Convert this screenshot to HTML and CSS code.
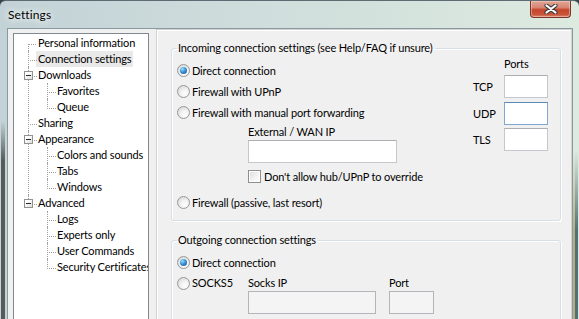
FILE: index.html
```html
<!DOCTYPE html>
<html lang="en">
<head>
    <meta charset="UTF-8">
    <title>Settings</title>
    <link rel="stylesheet" href="styles.css">
</head>
<body>
<div class="window">
    <div class="titlebar">
        <span class="title">Settings</span>
        <button class="close-btn" title="Close">
            <svg width="14" height="10" viewBox="0 0 14 10">
                <path d="M2.5 1.5 L11.5 8.5 M11.5 1.5 L2.5 8.5" stroke="#3c3c3c" stroke-width="4.2" stroke-linecap="round"/>
                <path d="M2.5 1.5 L11.5 8.5 M11.5 1.5 L2.5 8.5" stroke="#ffffff" stroke-width="2.2" stroke-linecap="round"/>
            </svg>
        </button>
    </div>

    <div class="client">
        <ul class="tree">
            <li><span class="node">Personal information</span></li>
            <li><span class="node selected">Connection settings</span></li>
            <li><span class="toggle"></span><span class="node">Downloads</span>
                <ul>
                    <li><span class="node">Favorites</span></li>
                    <li><span class="node">Queue</span></li>
                </ul>
            </li>
            <li><span class="node">Sharing</span></li>
            <li><span class="toggle"></span><span class="node">Appearance</span>
                <ul>
                    <li><span class="node">Colors and sounds</span></li>
                    <li><span class="node">Tabs</span></li>
                    <li><span class="node">Windows</span></li>
                </ul>
            </li>
            <li><span class="toggle"></span><span class="node">Advanced</span>
                <ul>
                    <li><span class="node">Logs</span></li>
                    <li><span class="node">Experts only</span></li>
                    <li><span class="node">User Commands</span></li>
                    <li><span class="node">Security Certificates</span></li>
                </ul>
            </li>
        </ul>

        <div class="page">
            <fieldset class="group">
                <legend>Incoming connection settings (see Help/FAQ if unsure)</legend>
                <div class="in-body">
                    <div class="options">
                        <label class="opt"><span class="radio checked"></span>Direct connection</label>
                        <label class="opt"><span class="radio"></span>Firewall with UPnP</label>
                        <label class="opt"><span class="radio"></span>Firewall with manual port forwarding</label>
                        <div class="wan">
                            <div class="field-label">External / WAN IP</div>
                            <input type="text" class="textbox wan-ip">
                            <label class="chk"><span class="checkbox"></span>Don't allow hub/UPnP to override</label>
                        </div>
                        <label class="opt passive"><span class="radio"></span>Firewall (passive, last resort)</label>
                    </div>
                    <div class="ports">
                        <span></span><span class="ports-title">Ports</span>
                        <span>TCP</span><input type="text" class="textbox port">
                        <span>UDP</span><input type="text" class="textbox port focused">
                        <span>TLS</span><input type="text" class="textbox port">
                    </div>
                </div>
            </fieldset>

            <fieldset class="group group-out">
                <legend>Outgoing connection settings</legend>
                <label class="opt"><span class="radio checked"></span>Direct connection</label>
                <div class="socks">
                    <label class="chk"><span class="radio"></span>SOCKS5</label>
                    <span>Socks IP</span>
                    <span>Port</span>
                    <span></span>
                    <input type="text" class="textbox socks-ip" disabled>
                    <input type="text" class="textbox socks-port" disabled>
                </div>
            </fieldset>
        </div>
    </div>
</div>
</body>
</html>
```

FILE: styles.css
```css
* {
    box-sizing: border-box;
}
html, body {
    margin: 0;
    padding: 0;
}
body {
    font-family: Lato, "Noto Sans", sans-serif;
    font-size: 11px;
    letter-spacing: -0.15px;
    color: #000;
    overflow: hidden;
    background: #3a4448;
}
.window {
    height: 319px;
    display: flex;
    flex-direction: column;
    overflow: hidden;
    border-top: 1px solid #5d6c72;
    border-radius: 6px 6px 0 0;
    background:
        linear-gradient(180deg, rgba(60, 60, 60, 0) 120px, rgba(50, 50, 50, 0.75) 160px) 1px 0 / 4px 100% no-repeat,
        linear-gradient(180deg, rgba(0, 0, 0, 0) 150px, rgba(62, 100, 108, 0.9) 230px) 575px 0 / 3px 100% no-repeat,
        linear-gradient(180deg, rgba(0, 0, 0, 0) 150px, rgba(176, 160, 100, 0.8) 230px) 573px 0 / 2px 100% no-repeat,
        linear-gradient(90deg, #c2d2d6 0%, #cfdddc 45%, #dceadf 100%);
}
.titlebar {
    height: 27px;
    display: flex;
    align-items: center;
    justify-content: space-between;
    padding: 0 8px 0 8px;
}
.title {
    font-size: 12px;
    letter-spacing: 0.1px;
    text-shadow: 0 0 6px #fff, 0 0 10px #fff;
}
.close-btn {
    align-self: flex-start;
    width: 41px;
    height: 17px;
    padding: 0;
    border: 1px solid #7a3326;
    border-top: none;
    border-radius: 0 0 4px 4px;
    background: linear-gradient(180deg, #e1a596 0%, #d88875 40%, #c5462c 55%, #c9553a 85%, #dd8a70 100%);
    box-shadow: inset 0 0 0 1px rgba(255, 220, 210, 0.45);
    display: flex;
    align-items: center;
    justify-content: center;
}
.client {
    flex: 1;
    min-height: 0;
    display: flex;
    margin: 0 6px 0 7px;
    padding-left: 5px;
    border: 1px solid #8a989f;
    border-bottom: none;
    background: #f0f0f0;
    overflow: hidden;
}

/* tree */
.tree {
    width: 136px;
    flex: none;
    margin: 4px 0 0;
    padding: 1px 0 0;
    list-style: none;
    border: 1px solid #828790;
    border-bottom: none;
    background: #fff;
    white-space: nowrap;
    overflow: hidden;
}
.tree ul {
    list-style: none;
    margin: 0 0 0 -3px;
    padding: 0;
}
.tree li {
    position: relative;
    padding-left: 22px;
}
.tree li::before {
    content: "";
    position: absolute;
    left: 14px;
    top: 0;
    width: 8px;
    height: 9px;
    border-left: 1px dotted #a0a0a0;
    border-bottom: 1px dotted #a0a0a0;
}
.tree > li:first-child::before {
    border-left: none;
}
.tree li::after {
    content: "";
    position: absolute;
    left: 14px;
    top: 9px;
    bottom: 0;
    border-left: 1px dotted #a0a0a0;
}
.tree li:last-child::after {
    display: none;
}
.toggle {
    position: absolute;
    left: 10px;
    top: 4px;
    width: 9px;
    height: 9px;
    z-index: 1;
    border: 1px solid #929292;
    background: linear-gradient(135deg, #ffffff 30%, #dcdcdc 100%);
}
.toggle::before {
    content: "";
    position: absolute;
    left: 1px;
    top: 3px;
    width: 5px;
    height: 1px;
    background: #2b2b2b;
}
.node {
    display: inline-block;
    height: 16px;
    line-height: 16px;
    padding: 0 2px;
}
.node.selected {
    background: #e9e9e9;
}

/* page */
.page {
    flex: 1;
    min-width: 0;
    margin-left: 7px;
    padding: 10px 10px 0 14px;
    border: 1px solid #d2d2d2;
    border-bottom: none;
    box-shadow: inset 1px 1px 0 #fff;
}
.group {
    margin: 0;
    min-width: 0;
    padding: 4px 12px 7px 5px;
    border: 1px solid #d5dfe5;
    border-radius: 3px;
    box-shadow: inset 1px 1px 0 #fff, 1px 1px 0 #fff;
}
.group legend {
    padding: 0 2px 0 1px;
    line-height: 16px;
}
.group-out {
    margin-top: 11px;
}
.in-body {
    display: flex;
}
.options {
    flex: 1;
}
.opt {
    display: flex;
    align-items: center;
    height: 21px;
}
.radio {
    width: 13px;
    height: 13px;
    flex: none;
    margin-right: 2px;
    border-radius: 50%;
    border: 1px solid #989898;
    background: radial-gradient(circle at 65% 70%, #ffffff 0%, #f2f2f2 40%, #cfcfcf 100%);
    position: relative;
}
.radio.checked::after {
    content: "";
    position: absolute;
    left: 2px;
    top: 2px;
    width: 7px;
    height: 7px;
    border-radius: 50%;
    background: radial-gradient(circle at 35% 30%, #9bdcff 0%, #3a93d6 45%, #0f4f8a 100%);
}
.checkbox {
    width: 13px;
    height: 13px;
    flex: none;
    margin-right: 3px;
    border: 1px solid #8f8f8f;
    background: linear-gradient(135deg, #dcdcdc 0%, #f4f4f4 60%, #ffffff 100%);
    box-shadow: inset 0 0 0 1px #fff;
}
.wan {
    padding-left: 71px;
}
.field-label {
    margin-top: 1px;
    line-height: 16px;
}
.textbox {
    display: block;
    height: 23px;
    margin: 0;
    padding: 0 3px;
    font: inherit;
    background: #fff;
    border: 1px solid #c4c8cc;
    border-top-color: #abadb3;
    border-radius: 0;
    outline: none;
}
.wan-ip {
    width: 149px;
}
.chk {
    display: flex;
    align-items: center;
    height: 16px;
    margin-top: 5px;
}
.passive {
    margin-top: 8px;
}
.ports {
    display: grid;
    grid-template-columns: 31px 44px;
    row-gap: 3px;
    align-items: center;
    align-self: flex-start;
    margin-top: -4px;
}
.ports-title {
    line-height: 16px;
}
.port {
    width: 44px;
}
.port.focused {
    margin-top: 1px;
    border-color: #7fa7cf;
    border-top-color: #5a8bb8;
}
.socks {
    display: grid;
    grid-template-columns: 71px 141px 45px;
    margin-top: 2px;
    line-height: 16px;
}
.socks .chk {
    margin-top: 0;
}
.socks .radio {
    margin-right: 2px;
}
.socks-ip {
    width: 128px;
    background: #f4f4f4;
    border-color: #b2b6ba;
}
.socks-port {
    width: 45px;
    background: #f4f4f4;
    border-color: #b2b6ba;
}
```
